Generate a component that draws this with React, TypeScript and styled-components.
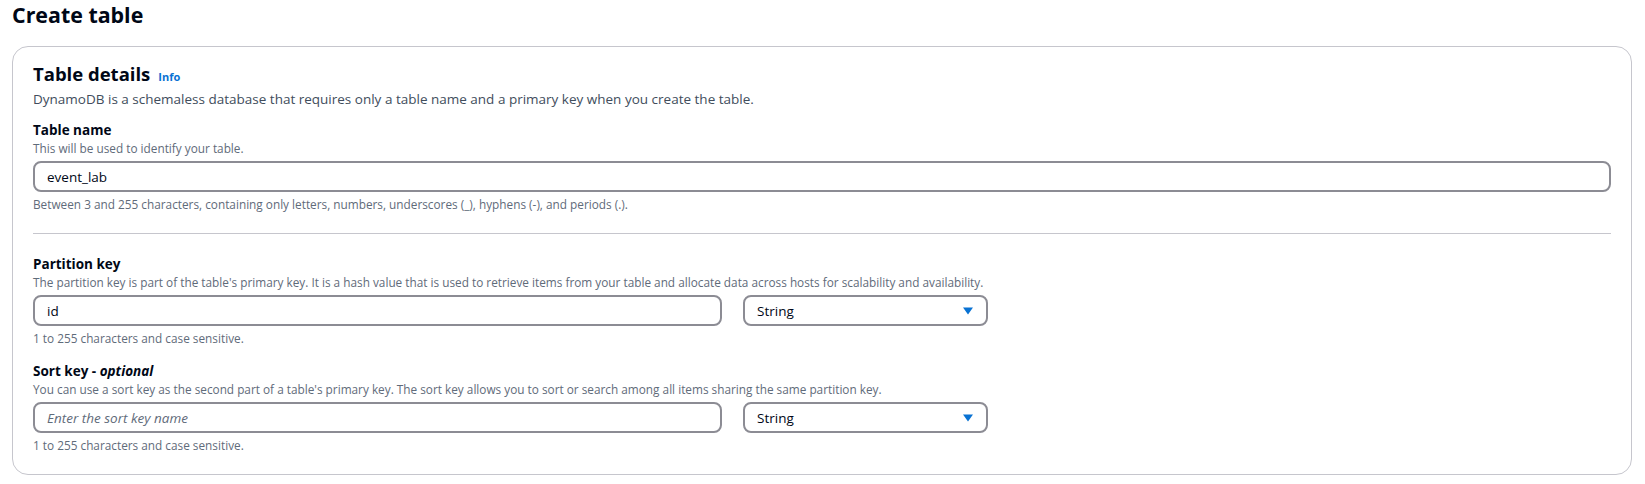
import styled, { createGlobalStyle } from 'styled-components';

const GlobalStyle = createGlobalStyle`
  body {
    margin: 0;
    background: #ffffff;
    font-family: "Open Sans", "Noto Sans", Arial, sans-serif;
    color: #000716;
  }
`;

const Page = styled.div`
  padding: 0 13px 10px 12px;
`;

const PageTitle = styled.h1`
  margin: 0 0 16px 0;
  font-size: 21.4px;
  line-height: 30px;
  font-weight: 700;
  color: #000716;
`;

const Panel = styled.div`
  border: 1px solid #c6c6cd;
  border-radius: 16px;
  padding: 14px 20px 21px 20px;
`;

const PanelHeader = styled.div`
  display: flex;
  align-items: baseline;
  gap: 8px;
`;

const PanelTitle = styled.h2`
  margin: 0;
  font-size: 18.5px;
  line-height: 26px;
  font-weight: 700;
`;

const InfoLink = styled.a`
  font-size: 11px;
  font-weight: 700;
  color: #0972d3;
  text-decoration: none;
`;

const PanelDescription = styled.p`
  margin: 2px 0 12px 0;
  font-size: 13.5px;
  line-height: 20px;
  color: #414d5c;
`;

const Field = styled.div<{ $spaced?: boolean }>`
  display: flex;
  flex-direction: column;
  margin-bottom: ${(p) => (p.$spaced ? '16px' : '0')};
`;

const Label = styled.label`
  font-size: 13.5px;
  line-height: 19px;
  font-weight: 700;
  color: #000716;

  em {
    font-style: italic;
  }
`;

const Hint = styled.span`
  font-size: 11.8px;
  line-height: 16px;
  color: #5f6b7a;
  margin-bottom: 5px;
`;

const Constraint = styled.span`
  font-size: 11.8px;
  line-height: 16px;
  color: #5f6b7a;
  margin-top: 4px;
`;

const Row = styled.div`
  display: flex;
  gap: 21px;
`;

const TextInput = styled.input<{ $width?: number }>`
  box-sizing: border-box;
  width: ${(p) => (p.$width ? `${p.$width}px` : '100%')};
  height: 31px;
  border: 2px solid #8c8c94;
  border-radius: 8px;
  padding: 0 12px;
  font-family: inherit;
  font-size: 13.5px;
  color: #000716;
  background: #ffffff;
  outline: none;

  &::placeholder {
    color: #5f6b7a;
    font-style: italic;
  }
`;

const Select = styled.div`
  box-sizing: border-box;
  width: 245px;
  height: 31px;
  border: 2px solid #8c8c94;
  border-radius: 8px;
  padding: 0 13px 0 12px;
  display: flex;
  align-items: center;
  justify-content: space-between;
  font-size: 13.5px;
  color: #000716;
`;

const Divider = styled.hr`
  border: none;
  border-top: 1px solid #c6c6cd;
  margin: 21px 0 21px 0;
`;

const Caret = () => (
  <svg width="10" height="8" viewBox="0 0 10 8">
    <path d="M0 0.5h10L5 7.5z" fill="#0972d3" />
  </svg>
);

export default function App() {
  return (
    <Page>
      <GlobalStyle />
      <PageTitle>Create table</PageTitle>
      <Panel>
        <PanelHeader>
          <PanelTitle>Table details</PanelTitle>
          <InfoLink href="#">Info</InfoLink>
        </PanelHeader>
        <PanelDescription>
          DynamoDB is a schemaless database that requires only a table name and a primary key when you create the table.
        </PanelDescription>
        <Field>
          <Label>Table name</Label>
          <Hint>This will be used to identify your table.</Hint>
          <TextInput defaultValue="event_lab" />
          <Constraint>
            Between 3 and 255 characters, containing only letters, numbers, underscores (_), hyphens (-), and periods (.).
          </Constraint>
        </Field>
        <Divider />
        <Field $spaced>
          <Label>Partition key</Label>
          <Hint>
            The partition key is part of the table's primary key. It is a hash value that is used to retrieve items from
            your table and allocate data across hosts for scalability and availability.
          </Hint>
          <Row>
            <TextInput $width={689} defaultValue="id" />
            <Select>
              String
              <Caret />
            </Select>
          </Row>
          <Constraint>1 to 255 characters and case sensitive.</Constraint>
        </Field>
        <Field>
          <Label>
            Sort key - <em>optional</em>
          </Label>
          <Hint>
            You can use a sort key as the second part of a table's primary key. The sort key allows you to sort or search
            among all items sharing the same partition key.
          </Hint>
          <Row>
            <TextInput $width={689} placeholder="Enter the sort key name" />
            <Select>
              String
              <Caret />
            </Select>
          </Row>
          <Constraint>1 to 255 characters and case sensitive.</Constraint>
        </Field>
      </Panel>
    </Page>
  );
}
